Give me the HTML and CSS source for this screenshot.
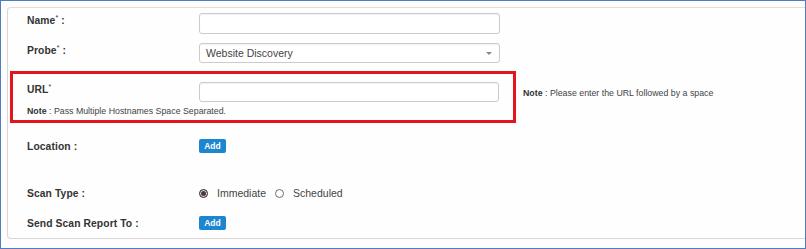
FILE: index.html
```html
<!DOCTYPE html>
<html lang="en">
<head>
    <meta charset="UTF-8">
    <meta name="viewport" content="width=device-width, initial-scale=1.0">
    <title>Add Scan</title>
    <link rel="stylesheet" href="styles.css">
</head>
<body>

    <div class="frame">
        <div class="panel">

            <div class="row row-name">
                <label class="label">Name<sup>*</sup> :</label>
                <input type="text" class="field">
            </div>

            <div class="row row-probe">
                <label class="label">Probe<sup>*</sup> :</label>
                <div class="field select">Website Discovery<span class="caret"></span></div>
            </div>

            <!-- URL block, boxed in red -->
            <div class="url-wrap">
                <div class="url-box">
                    <div class="row row-url">
                        <label class="label">URL<sup>*</sup></label>
                        <input type="text" class="field url-field">
                    </div>
                    <p class="note"><b>Note</b> : Pass Multiple Hostnames Space Separated.</p>
                </div>
                <p class="note side-note"><b>Note</b> : Please enter the URL followed by a space</p>
            </div>

            <div class="row row-btn row-location">
                <label class="label">Location :</label>
                <button class="btn-add">Add</button>
            </div>

            <div class="row row-btn row-scan">
                <label class="label">Scan Type :</label>
                <div class="radios">
                    <span class="radio checked"></span>
                    <span class="radio-text">Immediate</span>
                    <span class="radio"></span>
                    <span class="radio-text">Scheduled</span>
                </div>
            </div>

            <div class="row row-btn row-send">
                <label class="label">Send Scan Report To :</label>
                <button class="btn-add">Add</button>
            </div>

        </div>
    </div>

</body>
</html>
```

FILE: styles.css
```css
body {
    margin: 0;
    font-family: "Liberation Sans", Arial, sans-serif;
    color: #333;
    background: white;
}

.frame {
    width: 806px;
    height: 249px;
    box-sizing: border-box;
    border: 1px solid #4f7bc0;
    padding: 6px 0 0 6px;
    overflow: hidden;
    background: #fdfdfd;
}

.panel {
    width: 820px;
    height: 232px;
    box-sizing: border-box;
    border: 1px solid #d9d6d3;
    border-top-color: #e4dcd6;
    border-radius: 4px;
    background: #fefefe;
}

.row {
    display: flex;
    align-items: flex-start;
    padding-left: 19px;
}

.label {
    width: 172px;
    flex-shrink: 0;
    padding-top: 2px;
    font-size: 10.3px;
    font-weight: bold;
    letter-spacing: 0.1px;
    color: #333;
}

.label sup {
    font-size: 7px;
    font-weight: normal;
    vertical-align: 4px;
    line-height: 0;
}

.field {
    box-sizing: border-box;
    width: 301px;
    height: 21px;
    margin: 0;
    border: 1px solid #cbcbcb;
    border-radius: 3px;
    background: white;
    box-shadow: inset 0 1px 1px rgba(0, 0, 0, 0.05);
    outline: none;
}

.row-name {
    margin-top: 5px;
}

.row-probe {
    margin-top: 9px;
}

.select {
    position: relative;
    height: 20px;
    padding-left: 6px;
    font-size: 10.5px;
    line-height: 18px;
    color: #444;
}

.caret {
    position: absolute;
    right: 7px;
    top: 8px;
    border-left: 3px solid transparent;
    border-right: 3px solid transparent;
    border-top: 3px solid #888;
}

.url-wrap {
    display: flex;
    align-items: flex-start;
    margin-top: 8px;
    margin-left: 2px;
}

.url-box {
    box-sizing: border-box;
    width: 506px;
    height: 52px;
    border: 3px solid #e3141b;
    padding: 8px 0 0 14px;
}

.url-box .row {
    padding-left: 0;
}

.url-field {
    width: 300px;
    height: 20px;
}

.note {
    margin: 4px 0 0;
    font-size: 8.8px;
    color: #444;
}

.note b {
    color: #333;
}

.side-note {
    margin: 17px 0 0 7px;
}

.row-btn {
    align-items: center;
    height: 14px;
}

.row-btn .label {
    padding-top: 0;
}

.row-location {
    margin-top: 16px;
}

.row-scan {
    margin-top: 33px;
}

.row-send {
    margin-top: 16px;
}

.btn-add {
    width: 27px;
    height: 14px;
    padding: 0;
    border: none;
    border-radius: 2px;
    background: #1c86d0;
    color: white;
    font-family: "Liberation Sans", Arial, sans-serif;
    font-size: 8.5px;
    font-weight: bold;
    cursor: pointer;
}

.radios {
    display: flex;
    align-items: center;
    gap: 9px;
}

.radio {
    box-sizing: border-box;
    width: 9px;
    height: 9px;
    border: 1px solid #6d6d6d;
    border-radius: 50%;
    background: white;
}

.radio.checked {
    border-color: #4a4040;
    background: #4a3c3c;
    box-shadow: inset 0 0 0 1px #e8e2e2;
}

.radio-text {
    font-size: 10.5px;
    color: #444;
}
```
